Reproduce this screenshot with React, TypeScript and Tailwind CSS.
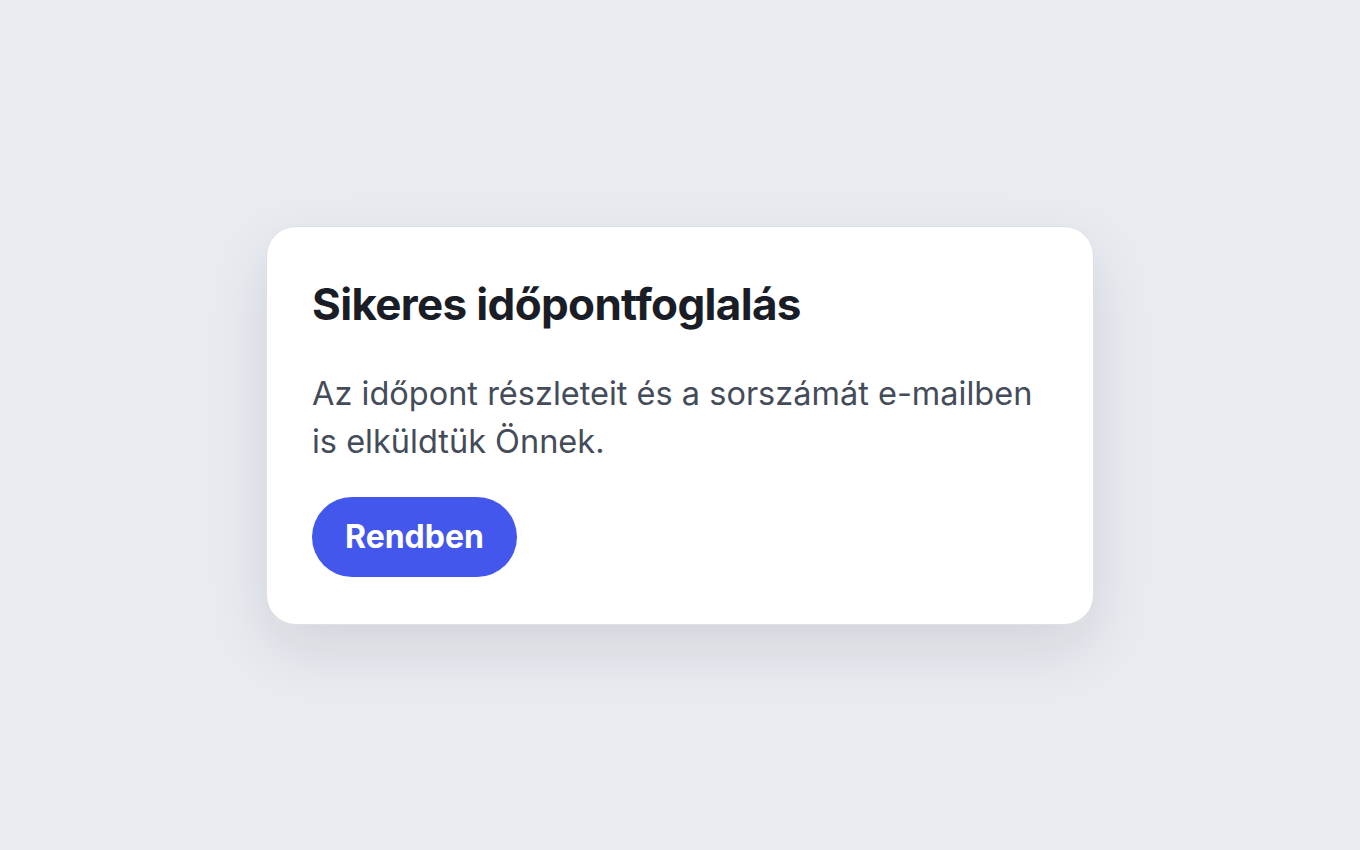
export default function App() {
  return (
    <div
      className="min-h-screen w-full bg-[#e8ebf0] flex items-center justify-center"
      style={{ fontFamily: 'Inter, "Noto Sans", sans-serif' }}
    >
      <div className="w-[828px] bg-white rounded-[30px] border border-[#dde0e6] shadow-[0_24px_60px_rgba(15,23,42,0.10)] pl-[45px] pr-[40px] pt-[51px] pb-[47px]">
        <h1 className="text-[44px] leading-[52px] font-bold tracking-[-0.015em] text-[#1a1d26]">
          Sikeres időpontfoglalás
        </h1>
        <p className="mt-[40px] text-[32.5px] leading-[48px] text-[#444b59]">
          Az időpont részleteit és a sorszámát <span className="whitespace-nowrap">e-mailben</span> is elküldtük Önnek.
        </p>
        <button className="mt-[31px] h-[80px] px-[33px] rounded-full bg-[#4357ec] text-white text-[32px] font-bold">
          Rendben
        </button>
      </div>
    </div>
  );
}
